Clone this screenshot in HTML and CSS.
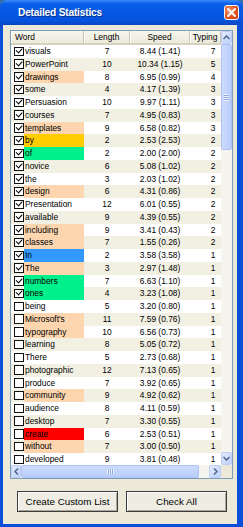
FILE: index.html
```html
<!DOCTYPE html>
<html lang="en">

<head>
    <meta charset="UTF-8">
    <title>Detailed Statistics</title>
    <link rel="stylesheet" href="styles.css">
</head>

<body>
    <div class="window">
        <div class="titlebar">
            <span class="title">Detailed Statistics</span>
            <span class="close">
                <svg width="9" height="9" viewBox="0 0 9 9"><path d="M1 1L8 8M8 1L1 8" stroke="#fff" stroke-width="1.8" stroke-linecap="round"/></svg>
            </span>
        </div>
        <div class="client">
            <div class="listview">
                <div class="grid">
                    <div class="head">
                        <div class="h-word">Word</div>
                        <div>Length</div>
                        <div>Speed</div>
                        <div>Typing</div>
                    </div>
                    <div class="rows">
                        <div class="row"><div class="word"><span class="check on"></span><span class="w">visuals</span></div><div>7</div><div>8.44 (1.41)</div><div class="typ">7</div></div>
                        <div class="row"><div class="word"><span class="check on"></span><span class="w">PowerPoint</span></div><div>10</div><div>10.34 (1.15)</div><div class="typ">5</div></div>
                        <div class="row"><div class="word"><span class="check on"></span><span class="w peach">drawings</span></div><div>8</div><div>6.95 (0.99)</div><div class="typ">4</div></div>
                        <div class="row"><div class="word"><span class="check on"></span><span class="w">some</span></div><div>4</div><div>4.17 (1.39)</div><div class="typ">3</div></div>
                        <div class="row"><div class="word"><span class="check on"></span><span class="w">Persuasion</span></div><div>10</div><div>9.97 (1.11)</div><div class="typ">3</div></div>
                        <div class="row"><div class="word"><span class="check on"></span><span class="w">courses</span></div><div>7</div><div>4.95 (0.83)</div><div class="typ">3</div></div>
                        <div class="row"><div class="word"><span class="check on"></span><span class="w peach">templates</span></div><div>9</div><div>6.58 (0.82)</div><div class="typ">3</div></div>
                        <div class="row"><div class="word"><span class="check on"></span><span class="w yellow">by</span></div><div>2</div><div>2.53 (2.53)</div><div class="typ">2</div></div>
                        <div class="row"><div class="word"><span class="check on"></span><span class="w green">of</span></div><div>2</div><div>2.00 (2.00)</div><div class="typ">2</div></div>
                        <div class="row"><div class="word"><span class="check on"></span><span class="w">novice</span></div><div>6</div><div>5.08 (1.02)</div><div class="typ">2</div></div>
                        <div class="row"><div class="word"><span class="check on"></span><span class="w">the</span></div><div>3</div><div>2.03 (1.02)</div><div class="typ">2</div></div>
                        <div class="row"><div class="word"><span class="check on"></span><span class="w peach">design</span></div><div>6</div><div>4.31 (0.86)</div><div class="typ">2</div></div>
                        <div class="row"><div class="word"><span class="check on"></span><span class="w">Presentation</span></div><div>12</div><div>6.01 (0.55)</div><div class="typ">2</div></div>
                        <div class="row"><div class="word"><span class="check on"></span><span class="w">available</span></div><div>9</div><div>4.39 (0.55)</div><div class="typ">2</div></div>
                        <div class="row"><div class="word"><span class="check on"></span><span class="w peach">including</span></div><div>9</div><div>3.41 (0.43)</div><div class="typ">2</div></div>
                        <div class="row"><div class="word"><span class="check on"></span><span class="w peach">classes</span></div><div>7</div><div>1.55 (0.26)</div><div class="typ">2</div></div>
                        <div class="row"><div class="word"><span class="check on"></span><span class="w blue">In</span></div><div>2</div><div>3.58 (3.58)</div><div class="typ">1</div></div>
                        <div class="row"><div class="word"><span class="check on"></span><span class="w peach">The</span></div><div>3</div><div>2.97 (1.48)</div><div class="typ">1</div></div>
                        <div class="row"><div class="word"><span class="check on"></span><span class="w green">numbers</span></div><div>7</div><div>6.63 (1.10)</div><div class="typ">1</div></div>
                        <div class="row"><div class="word"><span class="check on"></span><span class="w green">ones</span></div><div>4</div><div>3.23 (1.08)</div><div class="typ">1</div></div>
                        <div class="row"><div class="word"><span class="check"></span><span class="w">being</span></div><div>5</div><div>3.20 (0.80)</div><div class="typ">1</div></div>
                        <div class="row"><div class="word"><span class="check"></span><span class="w peach">Microsoft's</span></div><div>11</div><div>7.59 (0.76)</div><div class="typ">1</div></div>
                        <div class="row"><div class="word"><span class="check"></span><span class="w peach">typography</span></div><div>10</div><div>6.56 (0.73)</div><div class="typ">1</div></div>
                        <div class="row"><div class="word"><span class="check"></span><span class="w">learning</span></div><div>8</div><div>5.05 (0.72)</div><div class="typ">1</div></div>
                        <div class="row"><div class="word"><span class="check"></span><span class="w">There</span></div><div>5</div><div>2.73 (0.68)</div><div class="typ">1</div></div>
                        <div class="row"><div class="word"><span class="check"></span><span class="w">photographic</span></div><div>12</div><div>7.13 (0.65)</div><div class="typ">1</div></div>
                        <div class="row"><div class="word"><span class="check"></span><span class="w">produce</span></div><div>7</div><div>3.92 (0.65)</div><div class="typ">1</div></div>
                        <div class="row"><div class="word"><span class="check"></span><span class="w peach">community</span></div><div>9</div><div>4.92 (0.62)</div><div class="typ">1</div></div>
                        <div class="row"><div class="word"><span class="check"></span><span class="w">audience</span></div><div>8</div><div>4.11 (0.59)</div><div class="typ">1</div></div>
                        <div class="row"><div class="word"><span class="check"></span><span class="w">desktop</span></div><div>7</div><div>3.30 (0.55)</div><div class="typ">1</div></div>
                        <div class="row"><div class="word"><span class="check"></span><span class="w red">create</span></div><div>6</div><div>2.53 (0.51)</div><div class="typ">1</div></div>
                        <div class="row"><div class="word"><span class="check"></span><span class="w peach">without</span></div><div>7</div><div>3.00 (0.50)</div><div class="typ">1</div></div>
                        <div class="row"><div class="word"><span class="check"></span><span class="w">developed</span></div><div>9</div><div>3.81 (0.48)</div><div class="typ">1</div></div>
                    </div>
                </div>
                <div class="vscroll">
                    <div class="arrow">
                        <svg width="7" height="5" viewBox="0 0 7 5"><path d="M0.5 4L3.5 1L6.5 4" fill="none" stroke="#4d6185" stroke-width="1.4"/></svg>
                    </div>
                    <div class="track">
                        <div class="thumb v"><span class="grip"></span></div>
                    </div>
                    <div class="arrow">
                        <svg width="7" height="5" viewBox="0 0 7 5"><path d="M0.5 1L3.5 4L6.5 1" fill="none" stroke="#4d6185" stroke-width="1.4"/></svg>
                    </div>
                </div>
                <div class="hscroll">
                    <div class="arrow">
                        <svg width="5" height="7" viewBox="0 0 5 7"><path d="M4 0.5L1 3.5L4 6.5" fill="none" stroke="#4d6185" stroke-width="1.4"/></svg>
                    </div>
                    <div class="track">
                        <div class="thumb h"><span class="grip"></span></div>
                    </div>
                    <div class="arrow">
                        <svg width="5" height="7" viewBox="0 0 5 7"><path d="M1 0.5L4 3.5L1 6.5" fill="none" stroke="#4d6185" stroke-width="1.4"/></svg>
                    </div>
                </div>
                <div class="corner"></div>
            </div>
            <div class="buttons">
                <button>Create Custom List</button>
                <button>Check All</button>
            </div>
        </div>
    </div>
</body>

</html>
```

FILE: styles.css
```css
* {
    box-sizing: border-box;
}

body {
    margin: 0;
    width: 243px;
    height: 527px;
    overflow: hidden;
    font-family: "Liberation Sans", Arial, sans-serif;
    background: #3a6ea5;
}

.window {
    display: flex;
    flex-direction: column;
    height: 527px;
}

/* title bar */
.titlebar {
    height: 25px;
    display: flex;
    align-items: center;
    padding-left: 18px;
    border-radius: 7px 7px 0 0;
    background: linear-gradient(#3d8cf8 0, #0b5ee9 15%, #0457e4 55%, #0752dc 85%, #0845c0 100%);
}

.title {
    color: #fff;
    font-weight: bold;
    font-size: 10.2px;
    letter-spacing: -0.2px;
    text-shadow: 1px 1px 0 #0a2f8a;
}

.close {
    margin-left: auto;
    margin-right: 4px;
    width: 15px;
    height: 15px;
    border: 1px solid #fff;
    border-radius: 3px;
    background: radial-gradient(circle at 35% 35%, #f39a72, #e2531f 55%, #c43c10);
    display: flex;
    align-items: center;
    justify-content: center;
}

/* window body */
.client {
    flex: 1;
    background: #ece9d8;
    border: solid #0b4fd9;
    border-width: 0 6px 3px 3px;
    padding: 5px 4px 0 7px;
    display: flex;
    flex-direction: column;
}

.listview {
    height: 449px;
    border: 1px solid #7f9db9;
    background: #fff;
    display: grid;
    grid-template-columns: 210px 11px;
    grid-template-rows: 434px 13px;
}

.grid {
    overflow: hidden;
    font-size: 8.4px;
    color: #000;
}

.head,
.row {
    display: grid;
    grid-template-columns: 73px 46px 60px 31px;
}

.head {
    height: 14px;
    background: linear-gradient(#f7f6ee, #ebeadb);
    border-bottom: 2px solid #d6d2c2;
}

.head div {
    text-align: center;
    line-height: 12px;
    border-right: 1px solid #c9c6b4;
    box-shadow: inset 1px 0 #fff;
}

.head .h-word {
    text-align: left;
    padding-left: 4px;
}

.row {
    height: 12.75px;
    line-height: 12.75px;
    white-space: nowrap;
}

.row:nth-child(even) {
    background: #f2f0e3;
}

.row div {
    text-align: center;
    overflow: hidden;
}

.row .typ {
    text-align: right;
    padding-right: 5.5px;
}

.row .word {
    display: flex;
    align-items: center;
    text-align: left;
}

.check {
    flex: none;
    position: relative;
    width: 9.5px;
    height: 9.5px;
    margin-left: 3px;
    border: 1.4px solid #111;
    background: #fff;
}

.check.on::after {
    content: "";
    position: absolute;
    left: 0.6px;
    top: 0.4px;
    width: 5px;
    height: 2.6px;
    border-left: 1.9px solid #000;
    border-bottom: 1.9px solid #000;
    transform: rotate(-48deg);
}

.w {
    flex: 1;
    height: 100%;
    margin-left: 0.5px;
    padding-left: 1px;
}

.peach {
    background: #fdd6b0;
}

.yellow {
    background: #ffcc00;
}

.green {
    background: #00f08c;
}

.blue {
    background: #3399ff;
}

.red {
    background: #ff0000;
}

/* scrollbars */
.vscroll,
.hscroll {
    display: flex;
    background: #f5f4ef;
}

.vscroll {
    flex-direction: column;
}

.arrow {
    flex: none;
    width: 11px;
    height: 13px;
    display: flex;
    align-items: center;
    justify-content: center;
    border: 1px solid #bccdf6;
    border-radius: 2px;
    background: linear-gradient(135deg, #e3ebfe, #bcd0fb);
}

.hscroll .arrow {
    width: 12px;
    height: 13px;
}

.hscroll .arrow:first-child {
    width: 10px;
}

.track {
    flex: 1;
    display: flex;
}

.vscroll .track {
    flex-direction: column;
}

.thumb {
    display: flex;
    align-items: center;
    justify-content: center;
    border: 1px solid #adc2f2;
    border-radius: 2px;
    background: linear-gradient(90deg, #cddbfd, #b8cdfa);
}

.thumb.v {
    height: 106px;
}

.thumb.h {
    width: 178px;
    background: linear-gradient(#cddbfd, #b8cdfa);
}

.thumb.v .grip {
    width: 5px;
    height: 7px;
    background: repeating-linear-gradient(#eef3fe 0 1px, #8fa7e0 1px 2px);
}

.thumb.h .grip {
    width: 7px;
    height: 5px;
    background: repeating-linear-gradient(90deg, #eef3fe 0 1px, #8fa7e0 1px 2px);
}

.corner {
    background: #ece9d8;
}

/* buttons */
.buttons {
    display: flex;
    gap: 8px;
    margin-top: 12px;
    padding-left: 7px;
}

button {
    width: 101px;
    height: 21px;
    padding: 0;
    font-family: "Liberation Sans", Arial, sans-serif;
    font-size: 9.8px;
    color: #000;
    background: #efede3;
    border: 1px solid #3c3c3c;
    box-shadow: inset 1px 1px #fff, inset -1px -1px #aca899;
}
```
